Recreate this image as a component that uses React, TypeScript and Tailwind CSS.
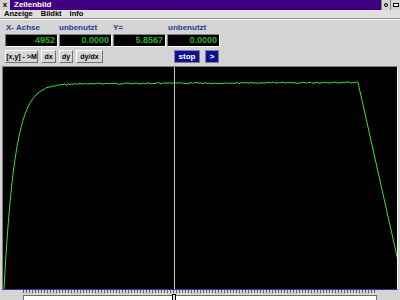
import React from 'react'

const font = { fontFamily: '"Liberation Sans", Arial, sans-serif' }

function buildCurve(): string {
	const pts: string[] = []
	let seed = 7
	const rnd = () => {
		seed = (seed * 9301 + 49297) % 233280
		return seed / 233280
	}
	for (let x = 1; x <= 355; x += 1) {
		const base = 17 + 205 * Math.exp(-(x - 1) / 11) - (x / 355) * 1.5
		const n = x > 40 ? (rnd() - 0.5) * 1.4 : 0
		pts.push(`${x},${(base + n).toFixed(1)}`)
	}
	pts.push('395,194')
	return pts.join(' ')
}

const curve = buildCurve()

function Field({ value }: { value: string }) {
	return (
		<div className="flex h-[13px] w-[53px] items-center justify-end border border-t-[#808080] border-l-[#808080] border-r-white border-b-white bg-black pr-[2px] text-[9px] font-bold leading-none text-[#30a830]">
			{value}
		</div>
	)
}

function Btn({ label, w }: { label: string; w: string }) {
	return (
		<div
			className={`flex h-[13px] ${w} items-center justify-center whitespace-nowrap border border-t-white border-l-white border-r-[#707070] border-b-[#707070] bg-[#d6d6d6] text-[7px] font-bold leading-none text-black`}
		>
			{label}
		</div>
	)
}

export default function App() {
	return (
		<div className="flex h-[300px] w-[400px] flex-col overflow-hidden bg-[#d4d4d4]" style={font}>
			{/* title bar */}
			<div className="flex h-[10px] shrink-0 items-center bg-[#3f0080]">
				<div className="flex h-[10px] w-[10px] items-center justify-center bg-[#d4d4d4] text-[8px] font-bold leading-none text-black">
					x
				</div>
				<div className="ml-[4px] text-[8px] font-bold leading-none text-white">Zeilenbild</div>
				<div className="ml-auto flex h-[10px] shrink-0">
					<div className="flex w-[9px] items-center justify-center border-l border-[#808080] bg-[#d4d4d4]">
						<div className="h-[4px] w-[4px] rounded-full border border-black" />
					</div>
					<div className="flex w-[10px] items-center justify-center border-l border-[#808080] bg-[#d4d4d4]">
						<div className="h-[4px] w-[6px] border border-black bg-white" />
					</div>
				</div>
			</div>
			{/* menu */}
			<div className="flex h-[9px] shrink-0 items-center gap-[8px] border-b border-[#909090] bg-[#e0e0e0] pl-[4px] text-[7.5px] font-bold leading-none text-black">
				<span>Anzeige</span>
				<span>Bildkt</span>
				<span>Info</span>
			</div>
			<div className="h-px shrink-0 bg-white" />
			{/* labels */}
			<div className="mt-[3px] flex h-[9px] shrink-0 items-center pl-[6px] text-[8px] font-bold leading-none text-[#1c3c94]">
				<span className="w-[53px]">X- Achse</span>
				<span className="w-[54px]">unbenutzt</span>
				<span className="w-[55px]">Y=</span>
				<span>unbenutzt</span>
			</div>
			{/* fields */}
			<div className="mt-[2px] flex shrink-0 gap-[1px] pl-[5px]">
				<Field value="4952" />
				<Field value="0.0000" />
				<Field value="5.8567" />
				<Field value="0.0000" />
			</div>
			{/* buttons */}
			<div className="mt-[3px] flex shrink-0 items-center pl-[5px]">
				<div className="flex gap-[3px]">
					<Btn label="[x,y] - >M" w="w-[33px]" />
					<Btn label="dx" w="w-[15px]" />
					<Btn label="dy" w="w-[14px]" />
					<Btn label="dy/dx" w="w-[27px]" />
				</div>
				<div className="ml-[71px] flex gap-[5px]">
					<div className="flex h-[13px] w-[26px] items-center justify-center border border-t-[#8080c0] border-l-[#8080c0] border-r-[#808080] border-b-[#808080] bg-[#10108c] text-[8px] font-bold leading-none text-white">
						stop
					</div>
					<div className="flex h-[13px] w-[14px] items-center justify-center border border-t-[#8080c0] border-l-[#8080c0] border-r-[#808080] border-b-[#808080] bg-[#10108c] text-[8px] font-bold leading-none text-white">
						&gt;
					</div>
				</div>
			</div>
			{/* plot */}
			<div className="mx-[2px] mt-[3px] h-[224px] shrink-0 border border-t-[#808080] border-l-[#808080] border-r-white border-b-[#3030a0] bg-black">
				<svg width="394" height="222" viewBox="0 0 394 222" className="block">
					<line x1="171.5" y1="0" x2="171.5" y2="222" stroke="#c8c8c8" strokeWidth="1" />
					<polyline points={curve} fill="none" stroke="#3ce03c" strokeWidth="1" />
				</svg>
			</div>
			{/* ticks */}
			<div className="ml-[23px] flex h-[4px] w-[354px] shrink-0 gap-[2px]">
				{Array.from({ length: 118 }).map((_, i) => (
					<div key={i} className="h-[3px] w-px bg-[#606060]" />
				))}
			</div>
			{/* slider */}
			<div className="relative ml-[23px] mt-[1px] h-[6px] w-[354px] shrink-0 border border-[#707070] bg-white">
				<div className="absolute left-[148px] top-[-2px] h-[8px] w-[4px] border border-black bg-[#e0e0e0]" />
			</div>
		</div>
	)
}
